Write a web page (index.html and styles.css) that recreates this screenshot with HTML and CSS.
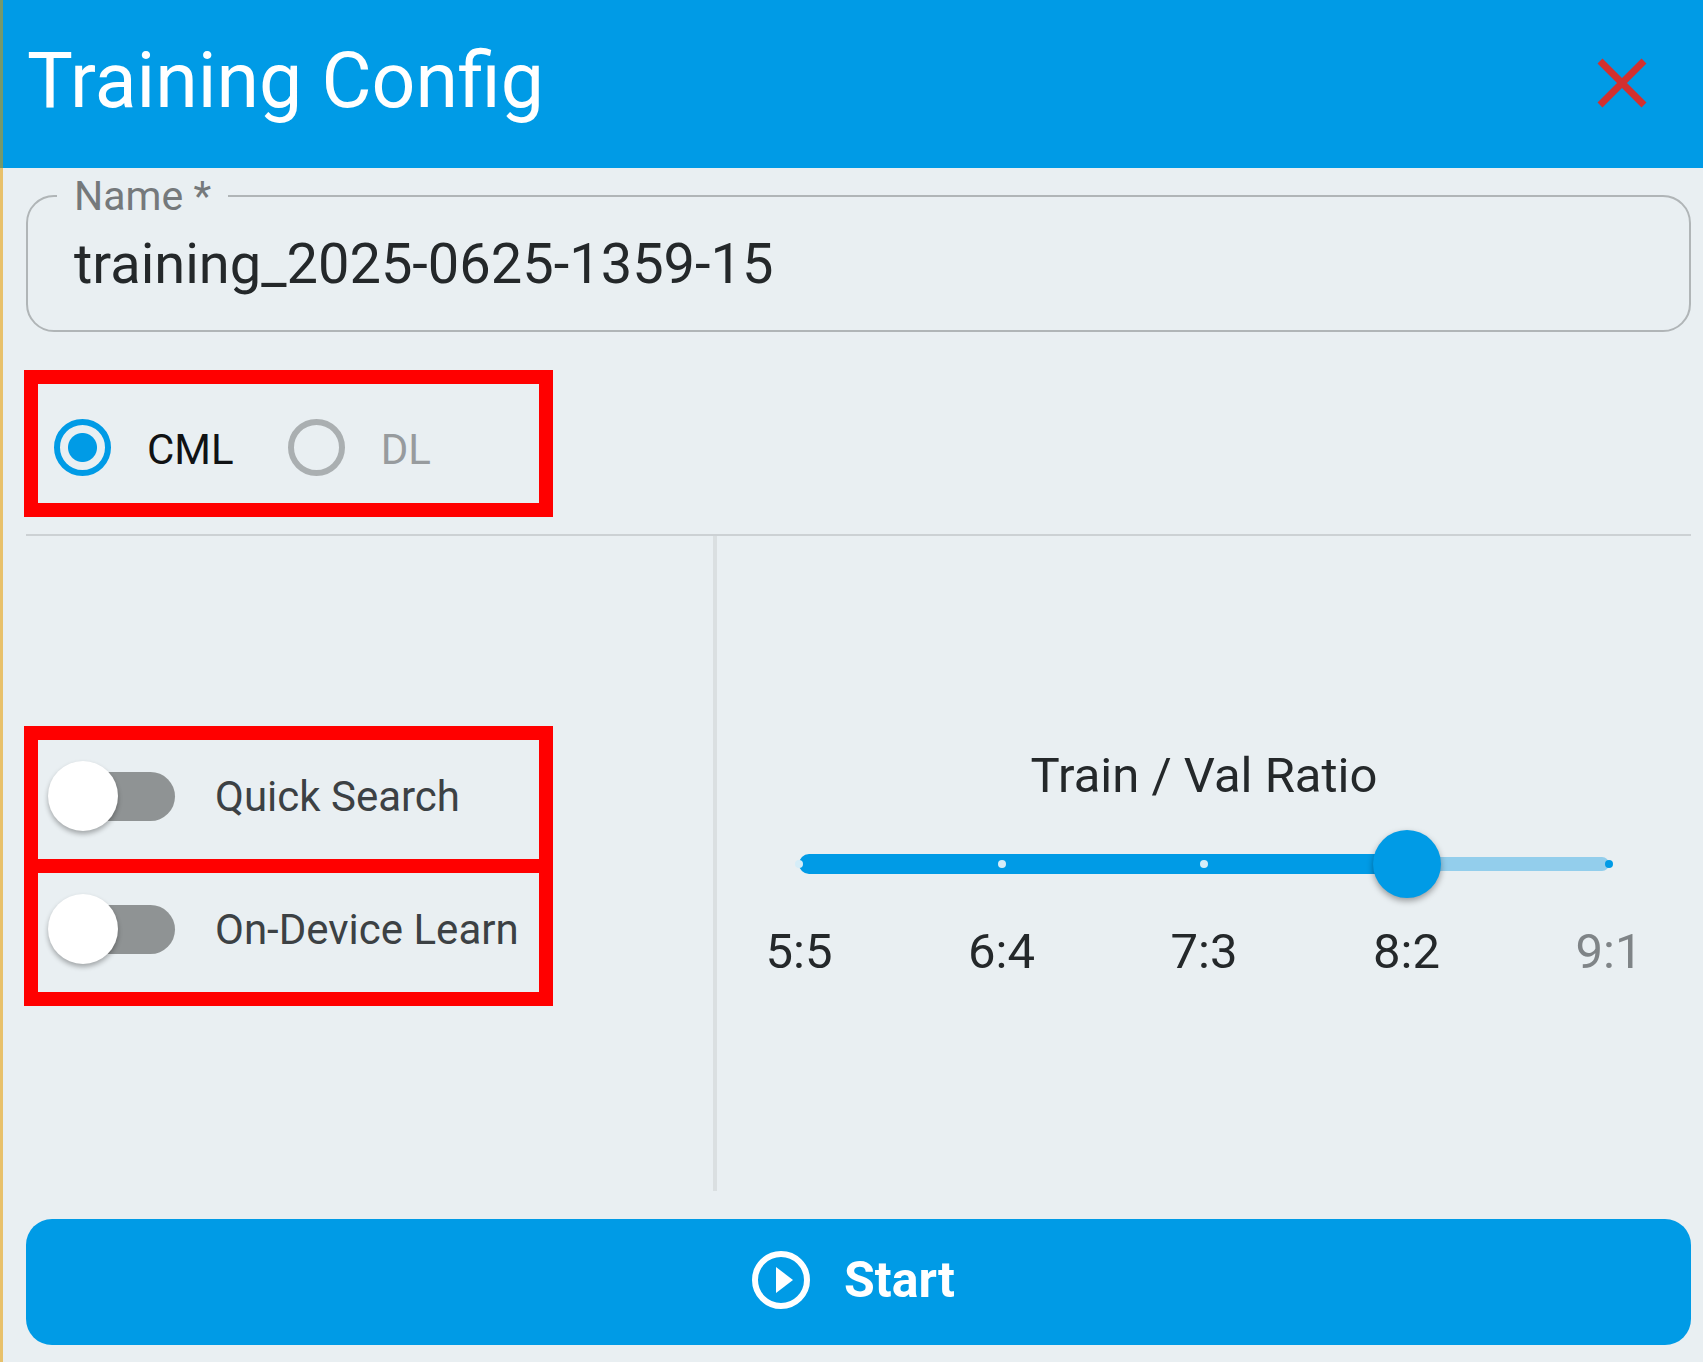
FILE: index.html
```html
<!DOCTYPE html>
<html lang="en">
<head>
    <meta charset="UTF-8">
    <meta name="viewport" content="width=device-width, initial-scale=1.0">
    <title>Training Config</title>
    <link rel="stylesheet" href="styles.css">
</head>
<body>
    <header class="header">
        <h1 class="title">Training Config</h1>
        <button class="close-button" type="button" aria-label="Close">
            <svg viewBox="0 0 50 50" width="50" height="50">
                <path d="M3 3L47 47M47 3L3 47" fill="none" stroke="#d3302f" stroke-width="7"/>
            </svg>
        </button>
    </header>

    <form class="content">
        <fieldset class="name-field">
            <legend><label for="name">Name *</label></legend>
            <input type="text" id="name" value="training_2025-0625-1359-15" required>
        </fieldset>

        <div class="marked type-group">
            <label class="radio">
                <input type="radio" name="type" value="cml" checked>
                <span>CML</span>
            </label>
            <label class="radio disabled">
                <input type="radio" name="type" value="dl" disabled>
                <span>DL</span>
            </label>
        </div>

        <div class="panes">
            <div class="options">
                <label class="marked switch">
                    <input type="checkbox" name="quick">
                    <span>Quick Search</span>
                </label>
                <label class="marked switch">
                    <input type="checkbox" name="on-device">
                    <span>On-Device Learn</span>
                </label>
            </div>
            <div class="ratio">
                <label class="ratio-title" for="ratio">Train / Val Ratio</label>
                <div class="slider">
                    <div class="rail"><div class="rail-active"></div></div>
                    <div class="ticks">
                        <i></i><i></i><i></i><i></i><i class="tick-off"></i>
                    </div>
                    <input type="range" id="ratio" min="5" max="9" step="1" value="8">
                </div>
                <div class="marks">
                    <span>5:5</span>
                    <span>6:4</span>
                    <span>7:3</span>
                    <span>8:2</span>
                    <span class="mark-off">9:1</span>
                </div>
            </div>
        </div>

        <button class="start-button" type="button">
            <svg viewBox="0 0 58 58" width="58" height="58">
                <circle cx="29" cy="29" r="26" fill="none" stroke="#fff" stroke-width="6"/>
                <path d="M24 16L41 29L24 42Z" fill="#fff"/>
            </svg>
            <span>Start</span>
        </button>
    </form>
</body>
</html>
```

FILE: styles.css
```css
* {
    margin: 0;
    padding: 0;
    box-sizing: border-box;
}

body {
    font-family: Roboto, sans-serif;
    background: #e9eff2;
    color: #24282a;
    min-height: 100vh;
    display: flex;
    flex-direction: column;
}

input, button {
    font-family: inherit;
    color: inherit;
}

/* Header */
.header {
    display: flex;
    justify-content: space-between;
    align-items: center;
    padding: 36px 56px 38px 24px;
    background: #009be6;
    border-left: 3px solid #74996b;
}

.title {
    padding-bottom: 4px;
    font-size: 77px;
    line-height: 90px;
    font-weight: 400;
    color: white;
}

.close-button {
    display: flex;
    background: none;
    border: none;
    cursor: pointer;
}

/* Form */
.content {
    flex: 1;
    display: flex;
    flex-direction: column;
    padding: 8px 12px 17px 23px;
    border-left: 3px solid #e8c16b;
}

.name-field {
    border: 2px solid #b0b5b7;
    border-radius: 28px;
    padding: 0 29px 26px;
}

.name-field legend {
    padding: 0 17px;
    font-size: 41px;
    line-height: 40px;
    color: #75797b;
}

.name-field input {
    display: block;
    width: 100%;
    height: 88px;
    padding: 8px 17px 0;
    border: none;
    outline: none;
    background: none;
    font-size: 56px;
}

/* Red highlight frame */
.marked {
    width: 529px;
    height: 147px;
    border: 14px solid #ff0000;
    display: flex;
    align-items: center;
    padding-left: 16px;
    font-size: 42px;
}

.type-group {
    margin: 38px 0 17px -2px;
    padding-top: 8px;
    gap: 54px;
}

.radio {
    display: flex;
    align-items: center;
    gap: 36px;
    color: #101214;
}

.radio span {
    padding-top: 4px;
}

.radio input {
    appearance: none;
    width: 57px;
    height: 57px;
    border: 6px solid #009be6;
    border-radius: 50%;
}

.radio input:checked {
    background: radial-gradient(circle, #009be6 14px, transparent 15px);
}

.radio.disabled {
    color: #979b9e;
}

.radio.disabled input {
    border-color: #aaafb1;
}

.panes {
    flex: 1;
    display: flex;
    border-top: 2px solid #ccd1d4;
}

.options {
    flex: 0 0 691px;
    display: flex;
    flex-direction: column;
    justify-content: center;
    padding-top: 4px;
    border-right: 4px solid #dadfe1;
}

.switch {
    margin-left: -2px;
    padding: 0 0 6px 10px;
    gap: 40px;
    color: #3c4144;
}

.switch + .switch {
    margin-top: -14px;
}

.switch input {
    appearance: none;
    display: flex;
    align-items: center;
    width: 127px;
    height: 70px;
    position: relative;
}

.switch input::before {
    content: "";
    width: 93px;
    height: 49px;
    margin-left: 34px;
    border-radius: 25px;
    background: #8f9394;
}

.switch input::after {
    content: "";
    position: absolute;
    left: 0;
    width: 70px;
    height: 70px;
    border-radius: 50%;
    background: white;
    box-shadow: 0 3px 5px rgba(0, 0, 0, 0.3);
}

.switch input:checked::after {
    left: 57px;
}

/* Train / Val slider */
.ratio {
    flex: 1;
    display: flex;
    flex-direction: column;
    justify-content: center;
    padding: 0 48px;
    font-size: 49px;
    line-height: 60px;
}

.ratio-title {
    text-align: center;
}

.slider {
    display: grid;
    align-items: center;
    margin: 24px 0;
}

.rail, .ticks, .slider input {
    grid-area: 1 / 1;
}

.rail {
    height: 14px;
    margin: 0 34px;
    display: flex;
    align-items: center;
    background: #93ceec;
    border-radius: 7px;
}

.rail-active {
    width: 75%;
    height: 20px;
    border-radius: 10px;
    background: #009be6;
}

.ticks {
    display: flex;
    justify-content: space-between;
    margin: 0 30px;
}

.ticks i {
    width: 8px;
    height: 8px;
    border-radius: 50%;
    background: #d5edf8;
}

.ticks .tick-off {
    background: #009be6;
}

.slider input {
    appearance: none;
    width: 100%;
    height: 68px;
    background: none;
}

.slider input::-webkit-slider-thumb {
    appearance: none;
    width: 68px;
    height: 68px;
    border-radius: 50%;
    background: #009be6;
    box-shadow: 0 3px 6px rgba(0, 0, 0, 0.35);
}

.marks {
    display: flex;
    justify-content: space-between;
}

.marks span {
    width: 68px;
    text-align: center;
}

.marks .mark-off {
    color: #7f8487;
}

.start-button {
    display: flex;
    justify-content: center;
    align-items: center;
    gap: 34px;
    height: 126px;
    margin-top: 28px;
    padding: 0 10px 4px 0;
    border: none;
    border-radius: 26px;
    background: #009be6;
    color: white;
    font-size: 50px;
    font-weight: 700;
    cursor: pointer;
}
```
